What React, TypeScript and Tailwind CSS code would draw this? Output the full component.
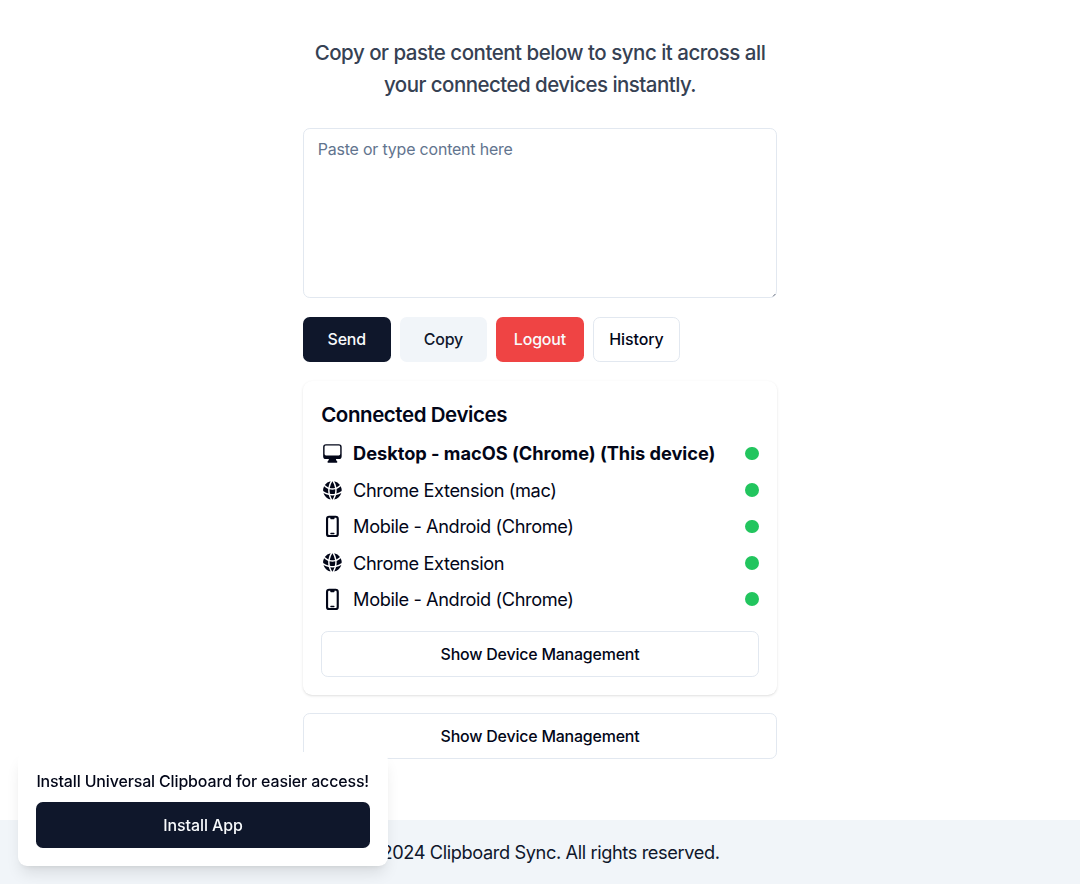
import { HiComputerDesktop, HiDevicePhoneMobile, HiGlobeAlt } from "react-icons/hi2";
import type { ReactNode } from "react";

type Kind = "desktop" | "extension" | "mobile";

const devices: { name: string; kind: Kind; current?: boolean }[] = [
  { name: "Desktop - macOS (Chrome) (This device)", kind: "desktop", current: true },
  { name: "Chrome Extension (mac)", kind: "extension" },
  { name: "Mobile - Android (Chrome)", kind: "mobile" },
  { name: "Chrome Extension", kind: "extension" },
  { name: "Mobile - Android (Chrome)", kind: "mobile" },
];

const icons = {
  desktop: HiComputerDesktop,
  extension: HiGlobeAlt,
  mobile: HiDevicePhoneMobile,
};

function Button({ className, children }: { className: string; children: ReactNode }) {
  return (
    <button
      className={`flex h-[45.6px] shrink-0 items-center justify-center rounded-[6.8px] pt-[2.4px] text-[15.95px] leading-[22.8px] font-medium whitespace-nowrap ${className}`}
    >
      {children}
    </button>
  );
}

const outline = "border border-slate-200 bg-white text-slate-950";

export default function App() {
  return (
    <div className="flex h-[884px] flex-col overflow-hidden bg-white font-['Inter',sans-serif] text-[18.23px] leading-[27.35px] text-slate-950">
      <main className="mx-auto flex w-[474px] flex-1 flex-col pt-[36.8px]">
        <p className="text-center text-[20.5px] leading-[31.9px] font-medium tracking-[-0.49px] whitespace-nowrap text-gray-700">
          Copy or paste content below to sync it across all
          <br />
          <span className="tracking-[-0.54px]">your connected devices instantly.</span>
        </p>
        <div className="relative mt-[26.9px] h-[170.8px] shrink-0">
          <textarea
            placeholder="Paste or type content here"
            className="block h-full w-full resize-none rounded-[6.8px] border border-slate-200 px-[13.7px] py-[10.1px] text-[15.95px] leading-[22.8px] tracking-[-0.18px] outline-none placeholder:text-slate-500"
          />
          <svg viewBox="0 0 4 4" className="absolute right-px bottom-px size-[4px]">
            <path d="M1 3.4 3.4 1" stroke="#6b7280" strokeWidth="1" />
          </svg>
        </div>
        <div className="mt-[18.6px] flex gap-[9.1px]">
          <Button className="w-[87.5px] bg-slate-900 tracking-[-0.15px] text-slate-50">Send</Button>
          <Button className="w-[87.5px] bg-slate-100 tracking-[-0.15px] text-slate-900">Copy</Button>
          <Button className="w-[87.5px] bg-[#ef4444] tracking-[-0.15px] text-slate-50">Logout</Button>
          <Button className={`w-[87.5px] tracking-[-0.08px] ${outline}`}>History</Button>
        </div>
        <section className="mt-[18.2px] rounded-[9.1px] bg-white p-[18.2px] shadow">
          <h2 className="text-[20.5px] leading-[31.9px] font-semibold tracking-[-0.43px]">Connected Devices</h2>
          <ul className="mt-[9.1px] flex flex-col gap-[9.1px]">
            {devices.map((device, i) => {
              const Icon = icons[device.kind];
              return (
                <li key={i} className="flex h-[27.35px] items-center justify-between">
                  <span
                    className={`flex items-center gap-[9.1px] whitespace-nowrap ${device.current ? "font-bold tracking-[-0.03px]" : "tracking-[-0.4px]"}`}
                  >
                    <Icon className="size-[22.8px]" />
                    <span className="pt-px">{device.name}</span>
                  </span>
                  <span className="size-[13.7px] rounded-full bg-[#22c55e]" />
                </li>
              );
            })}
          </ul>
          <Button className={`mt-[18.2px] w-full tracking-[-0.2px] ${outline}`}>Show Device Management</Button>
        </section>
        <Button className={`mt-[18.2px] w-full tracking-[-0.2px] ${outline}`}>Show Device Management</Button>
      </main>
      <footer className="flex h-[63.8px] shrink-0 items-center justify-center bg-slate-100 pt-[2px] tracking-[-0.4px] text-slate-900">
        © 2024 Clipboard Sync. All rights reserved.
      </footer>
      <aside className="fixed bottom-[18.2px] left-[18.2px] w-[369.8px] rounded-[9.1px] bg-white p-[18.2px] shadow-lg">
        <p className="mb-[8.1px] pt-px text-[15.95px] leading-[22.8px] font-medium tracking-[-0.13px] whitespace-nowrap">
          Install Universal Clipboard for easier access!
        </p>
        <Button className="w-full bg-slate-900 tracking-[-0.08px] text-slate-50">Install App</Button>
      </aside>
    </div>
  );
}
